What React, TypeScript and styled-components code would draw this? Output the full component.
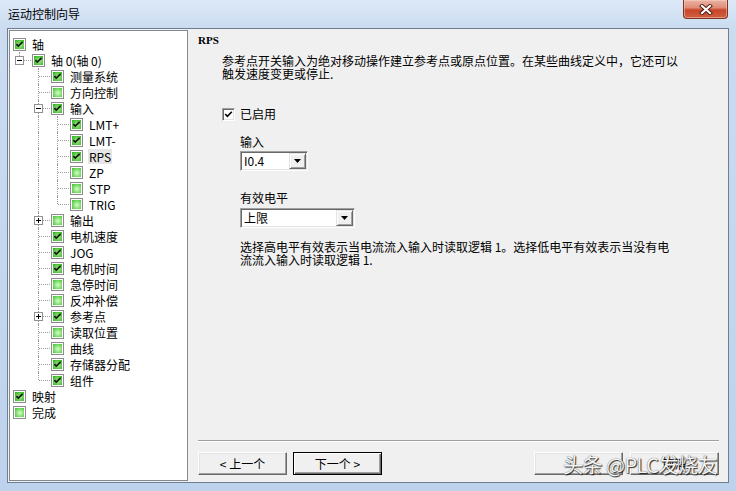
import React, { useId } from 'react';
import styled, { createGlobalStyle, css } from 'styled-components';

const FONT = `"Noto Sans CJK SC", "Liberation Sans", sans-serif`;

const GlobalStyle = createGlobalStyle`
  * { box-sizing: border-box; }
  html, body { margin: 0; padding: 0; background: #ffffff; }
  body { font-family: ${FONT}; font-size: 12px; color: #000; }
`;

const Window = styled.div`
  position: relative;
  width: 736px;
  height: 491px;
  display: flex;
  flex-direction: column;
  padding: 0 7px 8px 7px;
  background: linear-gradient(180deg, #dde9f7 0px, #cbdcf1 27px, #c3d6ee 60%, #bdd2ec 100%);
  overflow: hidden;
`;

const TitleBar = styled.div`
  height: 28px;
  flex: none;
  display: flex;
  align-items: flex-start;
`;

const TitleText = styled.div`
  padding: 6px 0 0 1px;
  line-height: 16px;
  font-size: 12px;
  color: #000;
`;

const CloseButton = styled.div`
  margin-left: auto;
  margin-right: 1px;
  width: 45px;
  height: 19px;
  display: flex;
  align-items: center;
  justify-content: center;
  border: 1px solid #7c3426;
  border-top: none;
  border-radius: 0 0 4px 4px;
  background: linear-gradient(180deg, #ebb4a6 0%, #df8d77 42%, #c8452c 56%, #d0603f 100%);
  box-shadow: inset 0 0 0 1px rgba(255, 215, 205, 0.45);
`;

const Client = styled.div`
  flex: 1;
  min-height: 0;
  display: flex;
  background: #f0f0f0;
  border: 1px solid #6f7f92;
`;

const TreePane = styled.div`
  width: 179px;
  flex: none;
  margin: 1px 0 1px 1px;
  background: #ffffff;
  border: 1px solid #828790;
  padding-top: 5px;
`;

const TreeRow = styled.div`
  display: flex;
  align-items: center;
  height: 16px;
  white-space: nowrap;
`;

const Guide = styled.span<{ $line: boolean }>`
  position: relative;
  flex: none;
  width: 19px;
  height: 16px;
  ${(p) =>
    p.$line &&
    css`
      &::before {
        content: '';
        position: absolute;
        left: 9px;
        top: 0;
        height: 16px;
        border-left: 1px dotted #9a9a9a;
      }
    `}
`;

const Elbow = styled.span<{ $last: boolean }>`
  position: relative;
  flex: none;
  width: 19px;
  height: 16px;
  &::before {
    content: '';
    position: absolute;
    left: 9px;
    top: 0;
    height: ${(p) => (p.$last ? '8px' : '16px')};
    border-left: 1px dotted #9a9a9a;
  }
  &::after {
    content: '';
    position: absolute;
    left: 10px;
    top: 8px;
    width: 11px;
    border-top: 1px dotted #9a9a9a;
  }
`;

const ExpanderBox = styled.svg`
  position: absolute;
  left: 5px;
  top: 4px;
  z-index: 1;
`;

const TreeCheckWrap = styled.span`
  flex: none;
  display: flex;
  margin-left: 3px;
`;

const TreeLabel = styled.span<{ $selected?: boolean }>`
  margin-left: 5px;
  padding: 0 1px;
  line-height: 15px;
  font-size: 12px;
  ${(p) =>
    p.$selected &&
    css`
      background: #e6e6e6;
    `}
`;

const Panel = styled.div`
  flex: 1;
  min-width: 0;
  display: flex;
  flex-direction: column;
  padding: 3px 9px 7px 10px;
`;

const StepTitle = styled.div`
  font-family: "Liberation Serif", serif;
  font-weight: bold;
  font-size: 11px;
  line-height: 16px;
  height: 16px;
`;

const Desc = styled.div<{ $indent: number; $top: number }>`
  margin: ${(p) => p.$top}px 0 0 ${(p) => p.$indent}px;
  line-height: 13px;
  white-space: nowrap;
`;

const DescLine = styled.div`
  height: 13px;
`;

const CheckRow = styled.label`
  display: flex;
  align-items: center;
  gap: 5px;
  height: 16px;
  margin: 26px 0 0 24px;
  line-height: 16px;
`;

const ClassicCheck = styled.span`
  width: 13px;
  height: 13px;
  flex: none;
  display: flex;
  align-items: center;
  justify-content: center;
  background: #ffffff;
  border: 1px solid;
  border-color: #a0a0a0 #ffffff #ffffff #a0a0a0;
  box-shadow: inset 1px 1px 0 #696969, inset -1px -1px 0 #e3e3e3;
`;

const Field = styled.div<{ $indent: number; $top: number }>`
  margin: ${(p) => p.$top}px 0 0 ${(p) => p.$indent}px;
  display: flex;
  flex-direction: column;
  align-items: flex-start;
`;

const FieldLabel = styled.div`
  line-height: 16px;
  height: 16px;
`;

const Combo = styled.div<{ $w: number; $gap: number }>`
  margin-top: ${(p) => p.$gap}px;
  width: ${(p) => p.$w}px;
  height: 20px;
  display: flex;
  background: #ffffff;
  border: 1px solid;
  border-color: #a0a0a0 #ffffff #ffffff #a0a0a0;
  box-shadow: inset 1px 1px 0 #696969, inset -1px -1px 0 #e3e3e3;
  padding: 1px;
`;

const ComboText = styled.span`
  flex: 1;
  padding-left: 2px;
  line-height: 16px;
  font-size: 12px;
`;

const DropButton = styled.span`
  width: 17px;
  height: 16px;
  flex: none;
  display: flex;
  align-items: center;
  justify-content: center;
  background: #f0f0f0;
  border: 1px solid;
  border-color: #e3e3e3 #696969 #696969 #e3e3e3;
  box-shadow: inset 1px 1px 0 #ffffff, inset -1px -1px 0 #a0a0a0;
`;

const Footer = styled.div`
  margin-top: auto;
  display: flex;
  flex-direction: column;
`;

const Separator = styled.div`
  height: 2px;
  border-top: 1px solid #a0a0a0;
  border-bottom: 1px solid #ffffff;
  margin-bottom: 10px;
`;

const ButtonRow = styled.div`
  display: flex;
  align-items: center;
`;

const ButtonGroup = styled.div<{ $gap: number }>`
  display: flex;
  gap: ${(p) => p.$gap}px;
`;

const Spacer = styled.div`
  flex: 1;
`;

const WizardButton = styled.button<{ $default?: boolean }>`
  width: 89px;
  height: 23px;
  padding: 0;
  font-family: ${FONT};
  font-size: 12px;
  line-height: 16px;
  color: #000000;
  background: #f0f0f0;
  border: 1px solid;
  border-color: #ffffff #696969 #696969 #ffffff;
  box-shadow: inset -1px -1px 0 #a0a0a0, inset 1px 1px 0 #e3e3e3;
  ${(p) =>
    p.$default &&
    css`
      border-color: #000000;
      box-shadow: inset 1px 1px 0 #ffffff, inset -1px -1px 0 #696969, inset -2px -2px 0 #a0a0a0;
    `}
`;

const Watermark = styled.div`
  position: absolute;
  left: 563px;
  top: 453px;
  font-size: 20px;
  line-height: 24px;
  color: #f4f4f4;
  white-space: nowrap;
  letter-spacing: -0.5px;
  text-shadow: 1px 1px 1px rgba(0, 0, 0, 0.8), 0 0 1px rgba(0, 0, 0, 0.7);
  pointer-events: none;
`;

function TreeCheckbox({ checked }: { checked: boolean }) {
  const id = useId().replace(/:/g, '');
  return (
    <svg width="13" height="13" viewBox="0 0 13 13">
      <defs>
        <radialGradient id={`g${id}`} cx="0.55" cy="0.55" r="0.7">
          <stop offset="0" stopColor={checked ? '#a9ec90' : '#d8fbcb'} />
          <stop offset="1" stopColor={checked ? '#2fb61e' : '#44c932'} />
        </radialGradient>
      </defs>
      <rect x="0.5" y="0.5" width="12" height="12" fill="#ffffff" stroke="#8c8c8c" />
      <rect x="2" y="2" width="9" height="9" fill={`url(#g${id})`} />
      {checked && (
        <path d="M3.4 6.1 L5.3 8.1 L9.6 3.8" fill="none" stroke="#151515" strokeWidth="1.7" />
      )}
    </svg>
  );
}

function Expander({ kind }: { kind: 'minus' | 'plus' }) {
  return (
    <ExpanderBox width="9" height="9" viewBox="0 0 9 9">
      <rect x="0.5" y="0.5" width="8" height="8" fill="#ffffff" stroke="#919191" />
      <path d="M2 4.5 H7" stroke="#000" strokeWidth="1" />
      {kind === 'plus' && <path d="M4.5 2 V7" stroke="#000" strokeWidth="1" />}
    </ExpanderBox>
  );
}

type TreeNode = {
  label: string;
  level: number;
  checked: boolean;
  guides?: boolean[];
  last?: boolean;
  exp?: 'minus' | 'plus';
  selected?: boolean;
};

const L2 = [false];
const L3 = [false, true];

const nodes: TreeNode[] = [
  { label: '轴', level: 0, checked: true },
  { label: '轴 0(轴 0)', level: 1, checked: true, guides: [], last: true, exp: 'minus' },
  { label: '测量系统', level: 2, checked: true, guides: L2 },
  { label: '方向控制', level: 2, checked: false, guides: L2 },
  { label: '输入', level: 2, checked: true, guides: L2, exp: 'minus' },
  { label: 'LMT+', level: 3, checked: true, guides: L3 },
  { label: 'LMT-', level: 3, checked: true, guides: L3 },
  { label: 'RPS', level: 3, checked: true, guides: L3, selected: true },
  { label: 'ZP', level: 3, checked: false, guides: L3 },
  { label: 'STP', level: 3, checked: false, guides: L3 },
  { label: 'TRIG', level: 3, checked: false, guides: L3, last: true },
  { label: '输出', level: 2, checked: false, guides: L2, exp: 'plus' },
  { label: '电机速度', level: 2, checked: true, guides: L2 },
  { label: 'JOG', level: 2, checked: true, guides: L2 },
  { label: '电机时间', level: 2, checked: true, guides: L2 },
  { label: '急停时间', level: 2, checked: false, guides: L2 },
  { label: '反冲补偿', level: 2, checked: false, guides: L2 },
  { label: '参考点', level: 2, checked: true, guides: L2, exp: 'plus' },
  { label: '读取位置', level: 2, checked: false, guides: L2 },
  { label: '曲线', level: 2, checked: false, guides: L2 },
  { label: '存储器分配', level: 2, checked: true, guides: L2 },
  { label: '组件', level: 2, checked: true, guides: L2, last: true },
  { label: '映射', level: 0, checked: true },
  { label: '完成', level: 0, checked: false },
];

function CloseGlyph() {
  return (
    <svg width="14" height="11" viewBox="0 0 14 11">
      <path d="M3 2 L11 9 M11 2 L3 9" stroke="#4a1a12" strokeWidth="4" strokeLinecap="square" />
      <path d="M3 2 L11 9 M11 2 L3 9" stroke="#ffffff" strokeWidth="2.2" strokeLinecap="square" />
    </svg>
  );
}

function CheckGlyph() {
  return (
    <svg width="9" height="9" viewBox="0 0 9 9">
      <path d="M1.2 4 L3.4 6.4 L7.8 1.8" fill="none" stroke="#000" strokeWidth="1.6" />
    </svg>
  );
}

function DownArrow() {
  return (
    <svg width="7" height="4" viewBox="0 0 7 4">
      <path d="M0 0 H7 L3.5 4 Z" fill="#000" />
    </svg>
  );
}

export default function App() {
  return (
    <>
      <GlobalStyle />
      <Window>
        <TitleBar>
          <TitleText>运动控制向导</TitleText>
          <CloseButton>
            <CloseGlyph />
          </CloseButton>
        </TitleBar>
        <Client>
          <TreePane>
            {nodes.map((n, i) => (
              <TreeRow key={i}>
                {n.level > 0 &&
                  (n.guides ?? []).map((g, j) => <Guide key={j} $line={g} />)}
                {n.level > 0 && (
                  <Elbow $last={!!n.last}>{n.exp && <Expander kind={n.exp} />}</Elbow>
                )}
                <TreeCheckWrap>
                  <TreeCheckbox checked={n.checked} />
                </TreeCheckWrap>
                <TreeLabel $selected={n.selected}>{n.label}</TreeLabel>
              </TreeRow>
            ))}
          </TreePane>
          <Panel>
            <StepTitle>RPS</StepTitle>
            <Desc $indent={24} $top={6}>
              <DescLine>参考点开关输入为绝对移动操作建立参考点或原点位置。在某些曲线定义中，它还可以</DescLine>
              <DescLine>触发速度变更或停止.</DescLine>
            </Desc>
            <CheckRow>
              <ClassicCheck>
                <CheckGlyph />
              </ClassicCheck>
              <span>已启用</span>
            </CheckRow>
            <Field $indent={42} $top={12}>
              <FieldLabel>输入</FieldLabel>
              <Combo $w={68} $gap={1}>
                <ComboText>I0.4</ComboText>
                <DropButton>
                  <DownArrow />
                </DropButton>
              </Combo>
            </Field>
            <Field $indent={42} $top={19}>
              <FieldLabel>有效电平</FieldLabel>
              <Combo $w={115} $gap={2}>
                <ComboText>上限</ComboText>
                <DropButton>
                  <DownArrow />
                </DropButton>
              </Combo>
            </Field>
            <Desc $indent={42} $top={12}>
              <DescLine>选择高电平有效表示当电流流入输入时读取逻辑 1。选择低电平有效表示当没有电</DescLine>
              <DescLine>流流入输入时读取逻辑 1.</DescLine>
            </Desc>
            <Footer>
              <Separator />
              <ButtonRow>
                <ButtonGroup $gap={6}>
                  <WizardButton>&lt; 上一个</WizardButton>
                  <WizardButton $default>下一个 &gt;</WizardButton>
                </ButtonGroup>
                <Spacer />
                <ButtonGroup $gap={7}>
                  <WizardButton aria-label="生成" />
                  <WizardButton>取消</WizardButton>
                </ButtonGroup>
              </ButtonRow>
            </Footer>
          </Panel>
        </Client>
        <Watermark>头条 @PLC发烧友</Watermark>
      </Window>
    </>
  );
}
